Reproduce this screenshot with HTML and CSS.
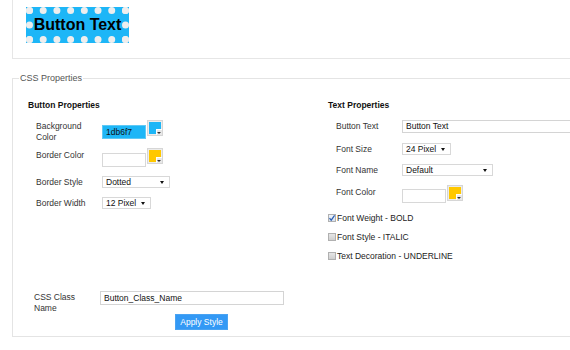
FILE: index.html
```html
<!DOCTYPE html>
<html lang="en">
<head>
    <meta charset="UTF-8">
    <title>CSS Button Generator</title>
    <link rel="stylesheet" href="styles.css">
</head>
<body>
    <div class="page">
        <div class="preview">
            <span class="demo-btn">Button Text</span>
        </div>
        <fieldset class="props">
            <legend>CSS Properties</legend>
            <div class="cols">
                <div class="col">
                    <h3>Button Properties</h3>
                    <div class="row row-bg">
                        <label class="lbl">Background<br>Color</label>
                        <div class="ctrl">
                            <div class="color-box blue">1db6f7</div>
                            <div class="swatch"><span class="fill fill-blue"></span></div>
                        </div>
                    </div>
                    <div class="row row-bc">
                        <label class="lbl">Border Color</label>
                        <div class="ctrl">
                            <div class="color-box"></div>
                            <div class="swatch"><span class="fill fill-yellow"></span></div>
                        </div>
                    </div>
                    <div class="row row-bs">
                        <label class="lbl">Border Style</label>
                        <div class="select w-dotted">Dotted</div>
                    </div>
                    <div class="row row-bw">
                        <label class="lbl">Border Width</label>
                        <div class="select w-px">12 Pixel</div>
                    </div>
                </div>
                <div class="col col-right">
                    <h3>Text Properties</h3>
                    <div class="row row-bt">
                        <label class="lbl">Button Text</label>
                        <div class="text-input wide">Button Text</div>
                    </div>
                    <div class="row row-fs">
                        <label class="lbl">Font Size</label>
                        <div class="select w-px">24 Pixel</div>
                    </div>
                    <div class="row row-fn">
                        <label class="lbl">Font Name</label>
                        <div class="select w-default">Default</div>
                    </div>
                    <div class="row row-fc">
                        <label class="lbl">Font Color</label>
                        <div class="ctrl">
                            <div class="color-box"></div>
                            <div class="swatch"><span class="fill fill-yellow"></span></div>
                        </div>
                    </div>
                    <div class="check-row first"><span class="check on"><svg viewBox="0 0 8 8" width="8" height="8"><path d="M1.5 4.2 L3.2 6.2 L6.6 1.4" fill="none" stroke="#2b5fb4" stroke-width="1.2"/></svg></span>Font Weight - BOLD</div>
                    <div class="check-row"><span class="check"></span>Font Style - ITALIC</div>
                    <div class="check-row"><span class="check"></span>Text Decoration - UNDERLINE</div>
                </div>
            </div>
            <div class="class-row">
                <label class="lbl class-lbl">CSS Class<br>Name</label>
                <div class="text-input class-input">Button_Class_Name</div>
            </div>
            <div class="apply-wrap">
                <button class="apply">Apply Style</button>
            </div>
        </fieldset>
    </div>
</body>
</html>
```

FILE: styles.css
```css
* {
    margin: 0;
    padding: 0;
    box-sizing: border-box;
}
body {
    width: 570px;
    height: 350px;
    overflow: hidden;
    background: #fff;
    font-family: "Liberation Sans", Arial, sans-serif;
    font-size: 8.5px;
    color: #333;
}
.page {
    padding-left: 12px;
    width: 570px;
}
.preview {
    border: 1px solid #e6e6e6;
    border-top: none;
    border-right: none;
    padding: 7px 0 15px 13px;
    height: 59px;
}
.demo-btn {
    display: inline-block;
    height: 36px;
    width: 103px;
    line-height: 22px;
    text-align: center;
    font-size: 16px;
    font-weight: bold;
    color: #000;
    background: #1db6f7;
    border: 7px dotted #eeeeee;
}
.props {
    margin-top: 14px;
    border: 1px solid #e4e4e4;
    border-right: none;
    padding: 0 0 6px 6px;
}
.props legend {
    padding: 0 1px;
    font-size: 9px;
    line-height: 11px;
    color: #555;
}
.cols {
    display: flex;
    margin-top: 16px;
    padding-left: 9px;
}
.col {
    width: 300px;
}
.col-right {
    width: 243px;
}
.col h3 {
    font-size: 8.5px;
    line-height: 10px;
    color: #111;
}
.row {
    display: flex;
    align-items: flex-start;
    padding-left: 8px;
}
.lbl {
    width: 66px;
    line-height: 11px;
    flex-shrink: 0;
}
.ctrl {
    display: flex;
    align-items: flex-start;
}
.color-box {
    width: 44px;
    height: 14px;
    margin-top: 5px;
    border: 1px solid #d8d8d8;
    background: #fff;
    color: #111;
    padding-left: 3px;
    line-height: 12px;
}
.color-box.blue {
    background: #1db6f7;
    border-color: #5fc9f5;
}
.swatch {
    width: 16px;
    height: 16px;
    margin-left: 1px;
    border: 1px solid #d6d6d6;
    background: #ececec;
    padding: 1px;
    position: relative;
}
.swatch .fill {
    display: block;
    width: 100%;
    height: 100%;
}
.fill-blue {
    background: #1db6f7;
}
.fill-yellow {
    background: #ffc800;
}
.swatch::after {
    content: "";
    position: absolute;
    right: 0;
    bottom: 0;
    width: 5px;
    height: 5px;
    background: #e8e8e8;
    border-left: 1px solid #fff;
    border-top: 1px solid #fff;
}
.swatch::before {
    content: "";
    position: absolute;
    right: 1px;
    bottom: 1px;
    border-left: 2px solid transparent;
    border-right: 2px solid transparent;
    border-top: 2px solid #333;
    z-index: 1;
}
.select {
    height: 12px;
    border: 1px solid #d8d8d8;
    background: #fff;
    color: #111;
    line-height: 10px;
    padding-left: 3px;
    position: relative;
}
.select::after {
    content: "";
    position: absolute;
    right: 5px;
    top: 4px;
    border-left: 2.5px solid transparent;
    border-right: 2.5px solid transparent;
    border-top: 3px solid #111;
}
.w-dotted {
    width: 68px;
}
.w-px {
    width: 49px;
}
.w-default {
    width: 91px;
}
.text-input {
    height: 14px;
    border: 1px solid #d4d4d4;
    background: #fff;
    color: #111;
    line-height: 12px;
    padding-left: 3px;
}
.text-input.wide {
    flex: 1;
    height: 13px;
    line-height: 11px;
    border-right: none;
}

/* left column rows */
.row-bg {
    margin-top: 10px;
}
.row-bg .lbl {
    margin-top: 1px;
}
.row-bc {
    margin-top: 5px;
}
.row-bc .lbl {
    margin-top: 2px;
}
.row-bs {
    margin-top: 9px;
    align-items: center;
}
.row-bw {
    margin-top: 9px;
    align-items: center;
}

/* right column rows */
.row-bt {
    margin-top: 10px;
    align-items: center;
}
.row-fs {
    margin-top: 10px;
    align-items: center;
}
.row-fn {
    margin-top: 9px;
    align-items: center;
}
.row-fc {
    margin-top: 9px;
}
.row-fc .lbl {
    margin-top: 2px;
}
.row-fc .color-box {
    margin-top: 4px;
}
.check-row {
    display: flex;
    align-items: center;
    height: 12px;
    margin-top: 7px;
    color: #222;
}
.check-row.first {
    margin-top: 9px;
}
.check {
    display: block;
    width: 8px;
    height: 8px;
    border: 1px solid #b0b0b0;
    background: linear-gradient(#e6e6e6, #cfcfcf);
    margin-right: 1px;
}
.check svg {
    display: block;
    margin: -1px 0 0 -1px;
}
.check.on {
    background: linear-gradient(#eef3fa, #d8e2ef);
}

.class-row {
    display: flex;
    align-items: flex-start;
    margin-top: 29px;
    padding-left: 15px;
}
.class-lbl {
    margin-top: 1px;
}
.class-input {
    width: 184px;
}
.apply-wrap {
    padding-left: 156px;
}
.apply {
    display: block;
    width: 53px;
    height: 16px;
    border: 1px solid #4aa3f2;
    background: #3399f5;
    color: #fff;
    font-family: "Liberation Sans", Arial, sans-serif;
    font-size: 8.5px;
    line-height: 14px;
    text-align: center;
}
```
